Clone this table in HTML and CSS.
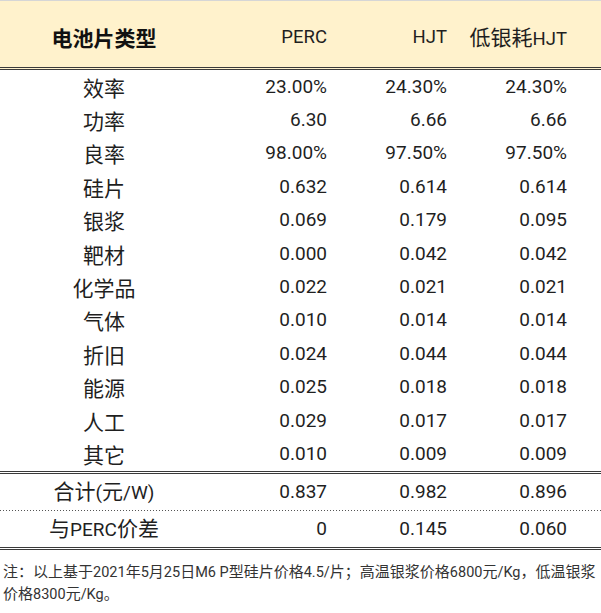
FILE: index.html
```html
<!DOCTYPE html>
<html lang="zh-CN">
<head>
<meta charset="utf-8">
<title>电池片成本对比</title>
<link rel="stylesheet" href="styles.css">
</head>
<body>
<div class="sheet">
  <div class="row head">
    <div class="label strong">电池片类型</div>
    <div class="num">PERC</div>
    <div class="num">HJT</div>
    <div class="num"><span class="cjk">低银耗</span>HJT</div>
  </div>
  <div class="body">
    <div class="row"><div class="label">效率</div><div class="num">23.00%</div><div class="num">24.30%</div><div class="num">24.30%</div></div>
    <div class="row"><div class="label">功率</div><div class="num">6.30</div><div class="num">6.66</div><div class="num">6.66</div></div>
    <div class="row"><div class="label">良率</div><div class="num">98.00%</div><div class="num">97.50%</div><div class="num">97.50%</div></div>
    <div class="row"><div class="label">硅片</div><div class="num">0.632</div><div class="num">0.614</div><div class="num">0.614</div></div>
    <div class="row"><div class="label">银浆</div><div class="num">0.069</div><div class="num">0.179</div><div class="num">0.095</div></div>
    <div class="row"><div class="label">靶材</div><div class="num">0.000</div><div class="num">0.042</div><div class="num">0.042</div></div>
    <div class="row"><div class="label">化学品</div><div class="num">0.022</div><div class="num">0.021</div><div class="num">0.021</div></div>
    <div class="row"><div class="label">气体</div><div class="num">0.010</div><div class="num">0.014</div><div class="num">0.014</div></div>
    <div class="row"><div class="label">折旧</div><div class="num">0.024</div><div class="num">0.044</div><div class="num">0.044</div></div>
    <div class="row"><div class="label">能源</div><div class="num">0.025</div><div class="num">0.018</div><div class="num">0.018</div></div>
    <div class="row"><div class="label">人工</div><div class="num">0.029</div><div class="num">0.017</div><div class="num">0.017</div></div>
    <div class="row"><div class="label">其它</div><div class="num">0.010</div><div class="num">0.009</div><div class="num">0.009</div></div>
  </div>
  <div class="row total"><div class="label">合计<span class="lat">(</span>元<span class="lat">/W)</span></div><div class="num">0.837</div><div class="num">0.982</div><div class="num">0.896</div></div>
  <div class="dots"></div>
  <div class="row diff"><div class="label">与<span class="lat">PERC</span>价差</div><div class="num">0</div><div class="num">0.145</div><div class="num">0.060</div></div>
  <p class="note">注：以上基于<span class="lat">2021</span>年<span class="lat">5</span>月<span class="lat">25</span>日<span class="lat">M6 P</span>型硅片价格<span class="lat">4.5/</span>片；高温银浆价格<span class="lat">6800</span>元<span class="lat">/Kg</span>，低温银浆<br>价格<span class="lat">8300</span>元<span class="lat">/Kg</span>。</p>
</div>
</body>
</html>
```

FILE: styles.css
```css
html, body {
  margin: 0;
  padding: 0;
  background: #ffffff;
}

body {
  font-family: "Noto Sans CJK SC", sans-serif;
  color: #1f1f1f;
}

.sheet {
  width: 601px;
  border-top: 1px solid #d6d6d6;
}

.row {
  display: grid;
  grid-template-columns: 208px 120px 120px 120px;
  align-items: center;
  line-height: 24px;
}

.head {
  background: #fff2cc;
  height: 60px;
  padding-top: 6px;
  border-bottom: 3px double #3a3a3a;
}

.label {
  text-align: center;
  font-family: "Noto Sans CJK SC", sans-serif;
  font-size: 21px;
  white-space: nowrap;
}

.strong {
  font-weight: bold;
  color: #111;
}

.num {
  text-align: right;
  padding-right: 1px;
  font-family: Roboto, "Noto Sans CJK SC", sans-serif;
  font-size: 19px;
  white-space: nowrap;
}

.head .num {
  font-size: 18.5px;
}

.num .cjk {
  font-family: "Noto Sans CJK SC", sans-serif;
  font-size: 21px;
}

.label .lat {
  font-family: Roboto, sans-serif;
  font-size: 19px;
}

.body {
  border-bottom: 3px double #3a3a3a;
}

.body .row {
  height: 33.4px;
}

.total {
  height: 36px;
}

.dots {
  height: 1px;
  background-image: repeating-linear-gradient(to right, #555 0 1px, transparent 1px 3px);
}

.diff {
  height: 36px;
  border-bottom: 3px double #3a3a3a;
}

.note {
  margin: 11px 0 0 3px;
  font-family: "Noto Sans CJK SC", sans-serif;
  font-size: 15px;
  line-height: 20px;
  color: #333;
  white-space: nowrap;
}

.note .lat {
  font-family: Roboto, sans-serif;
  font-size: 14.5px;
}
```
